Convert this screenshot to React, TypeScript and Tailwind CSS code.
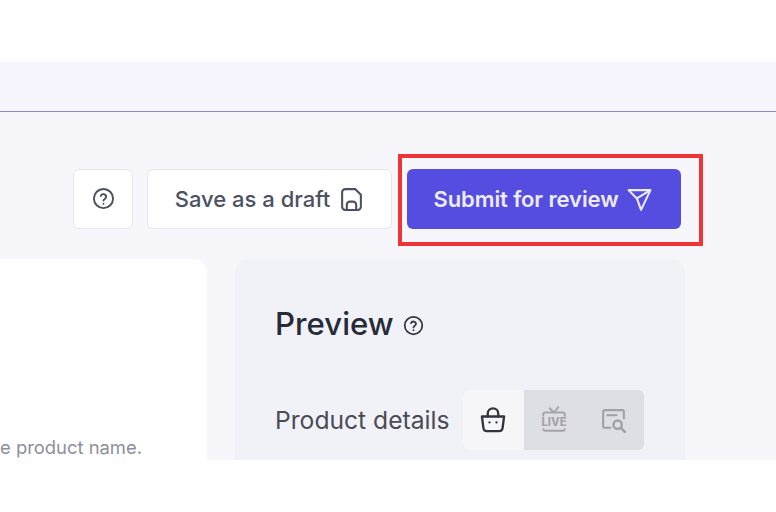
import React from "react";

const font = "font-['Inter','Liberation_Sans',sans-serif]";

function HelpIcon({ className }: { className: string }) {
  return (
    <svg viewBox="0 0 24 24" fill="none" stroke="currentColor" strokeWidth="2" strokeLinecap="round" strokeLinejoin="round" className={className}>
      <circle cx="12" cy="12" r="10" />
      <path d="M9.2 9.3a2.9 2.9 0 0 1 5.6 1c0 1.9-2.8 2.4-2.8 3.9" />
      <path d="M12 17.4h.01" />
    </svg>
  );
}

function SaveIcon() {
  return (
    <svg viewBox="0 0 24 24" fill="none" stroke="currentColor" strokeWidth="2" strokeLinecap="round" strokeLinejoin="round" className="w-[25px] h-[25px]">
      <path d="M3 5a3 3 0 0 1 3-3h9.5L21 7.500V19a3 3 0 0 1-3 3H6a3 3 0 0 1-3-3z" />
      <path d="M7.500 22v-5a3 3 0 0 1 3-3h3a3 3 0 0 1 3 3v5" />
    </svg>
  );
}

function SendIcon() {
  return (
    <svg viewBox="0 0 24 24" fill="none" stroke="currentColor" strokeWidth="2" strokeLinecap="round" strokeLinejoin="round" className="w-[25px] h-[25px]">
      <path d="M1.500 3h21L13.500 22 9.500 11z" />
      <path d="M9.500 11 22 3.200" />
    </svg>
  );
}

function BagIcon() {
  return (
    <svg viewBox="0 0 24 24" fill="none" stroke="currentColor" strokeWidth="2" strokeLinecap="round" strokeLinejoin="round" className="w-[28px] h-[28px] text-[#33343d]">
      <path d="M2.500 9h19l-1.300 10a3 3 0 0 1-3 2.500H6.800a3 3 0 0 1-3-2.500z" />
      <path d="M7.500 9V6.500a4.500 4.500 0 0 1 9 0V9" />
      <path d="M9 14h.01M15 14h.01" />
    </svg>
  );
}

function LiveIcon() {
  return (
    <svg viewBox="0 0 28 28" fill="none" className="w-[30px] h-[30px] text-[#a4a4ab]">
      <path d="M4 10V8.500A1.500 1.500 0 0 1 5.500 7h17A1.500 1.500 0 0 1 24 8.500V10M4 22.500A1.500 1.500 0 0 0 5.500 24h17a1.500 1.500 0 0 0 1.500-1.500M10 3l4 4 4-5" stroke="currentColor" strokeWidth="1.800" strokeLinecap="round" strokeLinejoin="round" />
      <text x="14" y="19.800" textAnchor="middle" fontSize="10.500" fontWeight="800" fill="currentColor" fontFamily="Inter, sans-serif">LIVE</text>
    </svg>
  );
}

function SearchCardIcon() {
  return (
    <svg viewBox="0 0 28 28" fill="none" stroke="currentColor" strokeWidth="2" strokeLinecap="round" strokeLinejoin="round" className="w-[29px] h-[29px] text-[#a0a0a7]">
      <path d="M11 21H5.500A1.500 1.500 0 0 1 4 19.500v-14A1.500 1.500 0 0 1 5.500 4h17A1.500 1.500 0 0 1 24 5.500V12" />
      <path d="M8 9h9" />
      <circle cx="18" cy="18" r="4" strokeWidth="2.300" />
      <path d="m21 21 4 4" strokeWidth="2.500" />
    </svg>
  );
}

export default function App() {
  return (
    <div className={`${font} relative h-[512px] w-[776px] overflow-hidden bg-white flex flex-col`}>
      <div className="h-[62px] shrink-0" />
      <div className="h-[50px] shrink-0 bg-[#f6f5fd] border-b border-b-[#8f86d8]" />

      <main className="h-[348px] shrink-0 overflow-hidden bg-[#f6f6fb] pt-[57px]">
        <div className="flex justify-end pr-[95px]">
          <button className="w-[60px] h-[60px] flex items-center justify-center bg-white rounded-[6px] border border-[#e6e6ee] text-[#4b4f5e] pb-[2px]">
            <HelpIcon className="w-[23px] h-[23px]" />
          </button>
          <button className="ml-[14px] w-[245px] h-[60px] flex items-center justify-center gap-[9px] bg-white rounded-[6px] border border-[#e6e6ee] text-[#4b5162] text-[22px] font-medium">
            Save as a draft
            <SaveIcon />
          </button>
          <button className="ml-[15px] w-[274px] h-[60px] flex items-center justify-center gap-[8px] bg-[#554de0] rounded-[6px] text-[#ecebfc] text-[22px] leading-[28px] font-semibold tracking-[-0.1px] pr-[3px]">
            Submit for review
            <SendIcon />
          </button>
        </div>

        <div className="mt-[30px] flex gap-[28px]">
          <div className="w-[207px] h-[201px] shrink-0 bg-white rounded-tr-[14px] flex flex-col justify-end overflow-hidden">
            <p className="pb-[1px] text-right pr-[65px] text-[18.400px] leading-[24px] text-[#8d909c] whitespace-nowrap">e product name.</p>
          </div>
          <div className="w-[450px] h-[201px] shrink-0 bg-[#f1f1f8] rounded-t-[14px] pl-[40px] pt-[45px]">
            <div className="flex items-center gap-[9px]">
              <h2 className="text-[31.200px] leading-[40px] font-medium text-[#272b38]">Preview</h2>
              <HelpIcon className="w-[21px] h-[21px] text-[#33343d] mt-[2px]" />
            </div>
            <div className="mt-[46px] flex items-center gap-[13px]">
              <span className="text-[24.650px] leading-[60px] text-[#4a4b55] whitespace-nowrap">Product details</span>
              <div className="flex h-[60px] rounded-[6px] bg-[#dedee5] overflow-hidden">
                <div className="w-[61px] flex items-center justify-center bg-[#f6f6f8]"><BagIcon /></div>
                <div className="w-[60px] flex items-center justify-center"><LiveIcon /></div>
                <div className="w-[60px] flex items-center justify-center"><SearchCardIcon /></div>
              </div>
            </div>
          </div>
        </div>
      </main>

      {/* annotation box on top of the submit button */}
      <div className="absolute left-[398px] top-[154px] w-[305px] h-[92px] border-[4px] border-[#ef3438]" />
    </div>
  );
}
